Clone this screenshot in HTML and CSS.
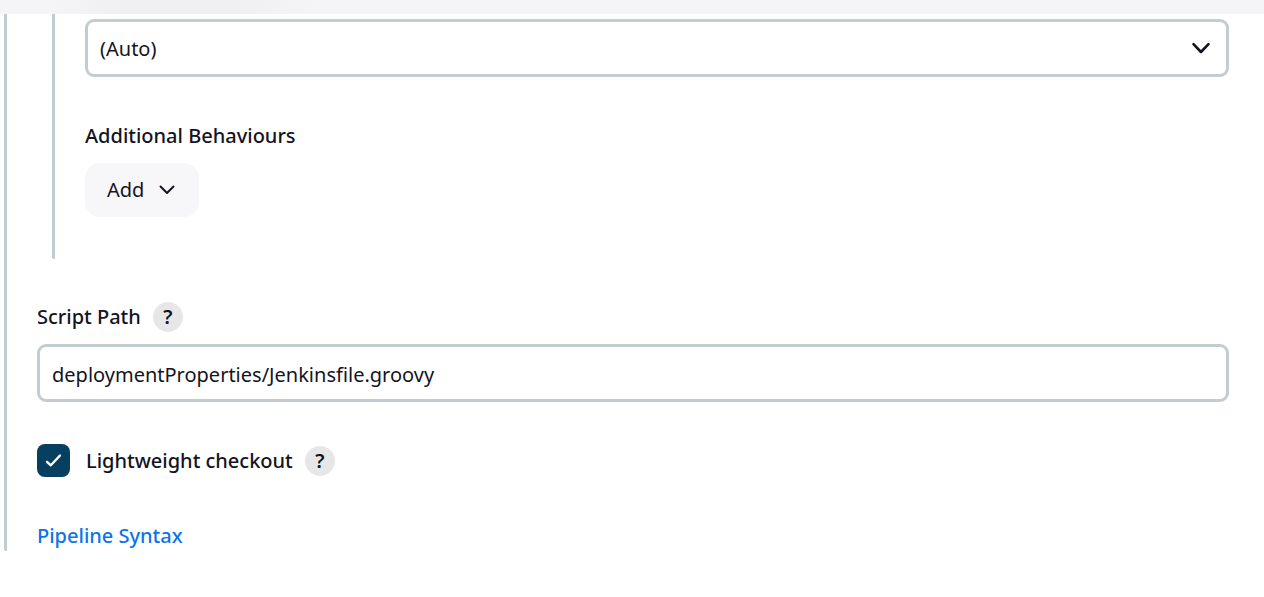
FILE: index.html
```html
<!DOCTYPE html>
<html lang="en">
<head>
<meta charset="utf-8">
<meta name="viewport" content="width=device-width, initial-scale=1">
<title>Pipeline configuration</title>
<link rel="stylesheet" href="styles.css">
</head>
<body>
<div class="topbar"></div>
<form class="section">
  <div class="nested">
    <div class="select-wrap">
      <select class="field" aria-label="Repository browser"><option>(Auto)</option></select>
      <svg class="select-arrow" width="20" height="14" viewBox="0 0 20 14" aria-hidden="true"><path d="M2.5 3.2 10 11 17.5 3.2"/></svg>
    </div>
    <h2 class="label behaviours-title">Additional Behaviours</h2>
    <button class="add" type="button">Add
      <svg width="16" height="12" viewBox="0 0 16 12" aria-hidden="true"><path d="M1.5 2.5 8 9 14.5 2.5"/></svg>
    </button>
  </div>
  <div class="label-row script-row">
    <label class="label" for="script-path">Script Path</label>
    <button class="help" type="button" aria-label="Help for Script Path">?</button>
  </div>
  <input class="field" id="script-path" type="text" value="deploymentProperties/Jenkinsfile.groovy">
  <div class="label-row check-row">
    <span class="check-wrap">
      <input class="check" id="lightweight" type="checkbox" checked>
      <svg class="tick" width="33" height="33" viewBox="0 0 33 33" aria-hidden="true"><path d="M10 17.8 13.8 21.3 23 11.5"/></svg>
    </span>
    <label class="label check-label" for="lightweight">Lightweight checkout</label>
    <button class="help" type="button" aria-label="Help for Lightweight checkout">?</button>
  </div>
  <a class="label syntax" href="#">Pipeline Syntax</a>
</form>
</body>
</html>
```
FILE: styles.css
```css
* { box-sizing: border-box; }
body {
  margin: 0;
  background: #fff;
  color: #14141f;
  font: 20px/28px "Segoe UI", "Noto Sans", sans-serif;
}
.topbar {
  height: 14px;
  background: linear-gradient(90deg, #f5f5f7 50px, #f0f0f2 120px, #f0f0f2 240px, #f5f5f7 320px);
}
.section {
  margin: 0 35px 46px 4px;
  padding: 0 0 1px 30px;
  border-left: 3px solid #c3ccd1;
  border-radius: 0 0 2px 2px;
}
.nested {
  margin-left: 15px;
  padding: 5px 0 42px 30px;
  border-left: 3px solid #c3ccd1;
  border-radius: 0 0 2px 2px;
}
.select-wrap { position: relative; }
.field {
  display: block;
  width: 100%;
  height: 58px;
  padding: 2px 12px 0;
  border: 3px solid #c3ccd1;
  border-radius: 9px;
  background: #fff;
  color: inherit;
  font: inherit;
  appearance: none;
}
.select-arrow {
  position: absolute;
  top: 22px;
  right: 18px;
  pointer-events: none;
}
svg {
  fill: none;
  stroke: #14141f;
  stroke-width: 2;
  stroke-linecap: round;
  stroke-linejoin: round;
}
.select-arrow { stroke-width: 2.6; }
.label {
  margin: 0;
  font-size: 20px;
  line-height: 28px;
  font-weight: 500;
}
.behaviours-title { margin: 45px 0 13px; }
.add {
  display: flex;
  align-items: center;
  gap: 15px;
  height: 54px;
  padding: 0 24px 0 22px;
  border: 0;
  border-radius: 15px;
  background: #f7f7f9;
  color: inherit;
  font: inherit;
}
.label-row { display: flex; align-items: center; gap: 12px; }
.script-row { margin: 43px 0 12px; }
.help {
  width: 30px;
  height: 30px;
  padding: 0;
  border: 0;
  border-radius: 50%;
  background: #e7e7e8;
  color: inherit;
  font: inherit;
  font-weight: 600;
  line-height: 30px;
}
.check-row { margin: 42px 0 45px; }
.check-wrap { position: relative; width: 33px; height: 33px; }
.check {
  display: block;
  width: 33px;
  height: 33px;
  margin: 0;
  border-radius: 8px;
  background: #073f61;
  appearance: none;
}
.tick { position: absolute; inset: 0; stroke: #fff; stroke-width: 2.4; pointer-events: none; }
.check-label { margin-left: 4px; }
.syntax { display: block; width: fit-content; color: #0b74ea; text-decoration: none; }
```
